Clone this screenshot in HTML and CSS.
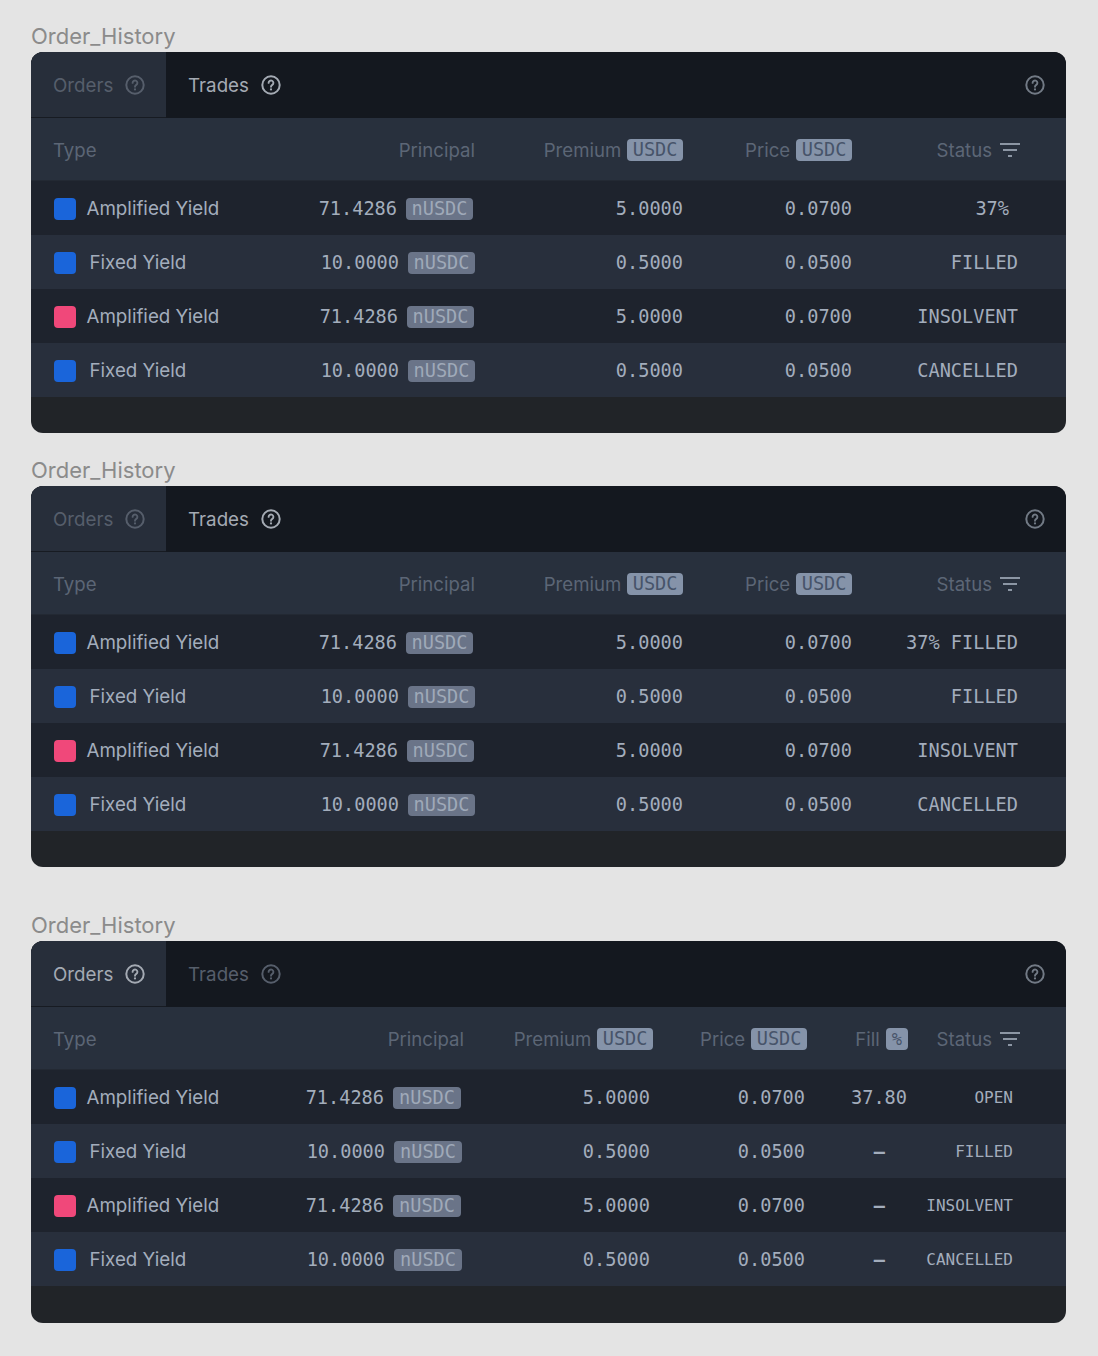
FILE: index.html
```html
<!DOCTYPE html>
<html lang="en">
<head>
    <title>Order_History</title>
    <meta charset="UTF-8">
    <link rel="stylesheet" href="styles.css">
</head>
<body>
    <svg class="sprite" width="0" height="0">
        <symbol id="help" viewBox="0 0 20 20">
            <circle cx="10" cy="10" r="8.7" fill="none" stroke="currentColor" stroke-width="2"/>
            <path d="M7.6 7.9a2.4 2.4 0 1 1 3.7 2c-.8.5-1.3 1-1.3 1.9" fill="none" stroke="currentColor" stroke-width="1.9" stroke-linecap="round"/>
            <circle cx="10" cy="14.4" r="1.1" fill="currentColor"/>
        </symbol>
        <symbol id="filter" viewBox="0 0 22 16">
            <path d="M1 2h20M4 8h14M9 14h4" fill="none" stroke="currentColor" stroke-width="2"/>
        </symbol>
    </svg>

    <section class="block first">
        <h2 class="title">Order_History</h2>
        <div class="card">
            <div class="tabs">
                <div class="tab on-bar">Orders <svg class="help"><use href="#help"/></svg></div>
                <div class="tab active">Trades <svg class="help"><use href="#help"/></svg></div>
                <svg class="help corner"><use href="#help"/></svg>
            </div>
            <div class="row head">
                <div>Type</div>
                <div class="num">Principal</div>
                <div class="num">Premium <span class="tag">USDC</span></div>
                <div class="num">Price <span class="tag">USDC</span></div>
                <div class="num status-head">Status <svg class="filter"><use href="#filter"/></svg></div>
            </div>
            <div class="row dark">
                <div class="type"><i class="dot blue"></i>Amplified Yield</div>
                <div class="num mono amp">71.4286 <span class="unit">nUSDC</span></div>
                <div class="num mono">5.0000</div>
                <div class="num mono">0.0700</div>
                <div class="num mono pct">37%</div>
            </div>
            <div class="row">
                <div class="type fixed"><i class="dot blue"></i>Fixed Yield</div>
                <div class="num mono">10.0000 <span class="unit">nUSDC</span></div>
                <div class="num mono">0.5000</div>
                <div class="num mono">0.0500</div>
                <div class="num mono">FILLED</div>
            </div>
            <div class="row dark">
                <div class="type"><i class="dot pink"></i>Amplified Yield</div>
                <div class="num mono amp-alt">71.4286 <span class="unit">nUSDC</span></div>
                <div class="num mono">5.0000</div>
                <div class="num mono">0.0700</div>
                <div class="num mono">INSOLVENT</div>
            </div>
            <div class="row">
                <div class="type fixed"><i class="dot blue"></i>Fixed Yield</div>
                <div class="num mono">10.0000 <span class="unit">nUSDC</span></div>
                <div class="num mono">0.5000</div>
                <div class="num mono">0.0500</div>
                <div class="num mono">CANCELLED</div>
            </div>
            <div class="foot"></div>
        </div>
    </section>

    <section class="block second">
        <h2 class="title">Order_History</h2>
        <div class="card">
            <div class="tabs">
                <div class="tab on-bar">Orders <svg class="help"><use href="#help"/></svg></div>
                <div class="tab active">Trades <svg class="help"><use href="#help"/></svg></div>
                <svg class="help corner"><use href="#help"/></svg>
            </div>
            <div class="row head">
                <div>Type</div>
                <div class="num">Principal</div>
                <div class="num">Premium <span class="tag">USDC</span></div>
                <div class="num">Price <span class="tag">USDC</span></div>
                <div class="num status-head">Status <svg class="filter"><use href="#filter"/></svg></div>
            </div>
            <div class="row dark">
                <div class="type"><i class="dot blue"></i>Amplified Yield</div>
                <div class="num mono amp">71.4286 <span class="unit">nUSDC</span></div>
                <div class="num mono">5.0000</div>
                <div class="num mono">0.0700</div>
                <div class="num mono">37% FILLED</div>
            </div>
            <div class="row">
                <div class="type fixed"><i class="dot blue"></i>Fixed Yield</div>
                <div class="num mono">10.0000 <span class="unit">nUSDC</span></div>
                <div class="num mono">0.5000</div>
                <div class="num mono">0.0500</div>
                <div class="num mono">FILLED</div>
            </div>
            <div class="row dark">
                <div class="type"><i class="dot pink"></i>Amplified Yield</div>
                <div class="num mono amp-alt">71.4286 <span class="unit">nUSDC</span></div>
                <div class="num mono">5.0000</div>
                <div class="num mono">0.0700</div>
                <div class="num mono">INSOLVENT</div>
            </div>
            <div class="row">
                <div class="type fixed"><i class="dot blue"></i>Fixed Yield</div>
                <div class="num mono">10.0000 <span class="unit">nUSDC</span></div>
                <div class="num mono">0.5000</div>
                <div class="num mono">0.0500</div>
                <div class="num mono">CANCELLED</div>
            </div>
            <div class="foot"></div>
        </div>
    </section>

    <section class="block">
        <h2 class="title">Order_History</h2>
        <div class="card orders">
            <div class="tabs">
                <div class="tab active on-bar">Orders <svg class="help"><use href="#help"/></svg></div>
                <div class="tab">Trades <svg class="help"><use href="#help"/></svg></div>
                <svg class="help corner"><use href="#help"/></svg>
            </div>
            <div class="row head">
                <div>Type</div>
                <div class="num">Principal</div>
                <div class="num">Premium <span class="tag">USDC</span></div>
                <div class="num">Price <span class="tag">USDC</span></div>
                <div class="num">Fill <span class="tag percent">%</span></div>
                <div class="num status-head">Status <svg class="filter"><use href="#filter"/></svg></div>
            </div>
            <div class="row dark">
                <div class="type"><i class="dot blue"></i>Amplified Yield</div>
                <div class="num mono">71.4286 <span class="unit">nUSDC</span></div>
                <div class="num mono">5.0000</div>
                <div class="num mono">0.0700</div>
                <div class="num mono">37.80</div>
                <div class="num mono small">OPEN</div>
            </div>
            <div class="row">
                <div class="type fixed"><i class="dot blue"></i>Fixed Yield</div>
                <div class="num mono">10.0000 <span class="unit">nUSDC</span></div>
                <div class="num mono">0.5000</div>
                <div class="num mono">0.0500</div>
                <div class="num mono dash">–</div>
                <div class="num mono small">FILLED</div>
            </div>
            <div class="row dark">
                <div class="type"><i class="dot pink"></i>Amplified Yield</div>
                <div class="num mono">71.4286 <span class="unit">nUSDC</span></div>
                <div class="num mono">5.0000</div>
                <div class="num mono">0.0700</div>
                <div class="num mono dash">–</div>
                <div class="num mono small">INSOLVENT</div>
            </div>
            <div class="row">
                <div class="type fixed"><i class="dot blue"></i>Fixed Yield</div>
                <div class="num mono">10.0000 <span class="unit">nUSDC</span></div>
                <div class="num mono">0.5000</div>
                <div class="num mono">0.0500</div>
                <div class="num mono dash">–</div>
                <div class="num mono small">CANCELLED</div>
            </div>
            <div class="foot"></div>
        </div>
    </section>
</body>
</html>
```

FILE: styles.css
```css
body {
    margin: 0;
    padding: 24px 32px 0 31px;
    background-color: #e4e4e4;
    font-family: Inter, "Liberation Sans", sans-serif;
    font-size: 18.75px;
    color: #a3adbc;
}
.sprite {
    position: absolute;
}
.block.first {
    margin-bottom: 25px;
}
.block.second {
    margin-bottom: 46px;
}
.title {
    margin: 0 0 4px;
    font-size: 22px;
    font-weight: 400;
    line-height: 24px;
    color: #8b8b8b;
}
.card {
    height: 381px;
    background-color: #212428;
    border-radius: 12px;
    overflow: hidden;
}
.card.orders {
    height: 382px;
}
.tabs {
    display: flex;
    align-items: stretch;
    height: 66px;
    background-color: #14181f;
    color: #565e6b;
}
.tab {
    display: flex;
    align-items: center;
    gap: 12px;
    width: 113px;
    padding-left: 22px;
}
.tab.on-bar {
    background-color: #272e3a;
    box-shadow: inset 0 -1px 0 #171b22;
}
.tab.active {
    color: #a4aab3;
}
.help {
    width: 20px;
    height: 20px;
}
.corner {
    align-self: center;
    margin-left: auto;
    margin-right: 21px;
    color: #727a85;
}
.row {
    display: grid;
    grid-template-columns: 200px 222px 208px 169px 166px;
    align-items: center;
    box-sizing: border-box;
    height: 54px;
    padding: 1px 48px 0 22px;
    background-color: #282f3c;
}
.row.dark {
    background-color: #1e232d;
}
.row.head {
    height: 63px;
    padding-top: 2px;
    background-color: #28303d;
    border-bottom: 1px solid #232933;
    font-size: 18.6px;
    color: #5c6676;
}
.orders .row {
    grid-template-columns: 188px 223px 189px 154px 101px 105px;
    padding-right: 53px;
}
.orders .row:not(.head) > .mono:nth-child(2) {
    padding-right: 2px;
}
.orders .row.dark > .mono:nth-child(2) {
    padding-right: 3px;
}
.orders .row:not(.head) > .mono:nth-child(3) {
    padding-right: 3px;
}
.orders .row:not(.head) > .mono:nth-child(4) {
    padding-right: 2px;
}
.orders .row:not(.head) > .mono:nth-child(5) {
    padding-right: 1px;
}
.orders .row:not(.head) > .mono.dash:nth-child(5) {
    padding-right: 23px;
    font-weight: 700;
}
.num {
    display: flex;
    justify-content: flex-end;
    align-items: center;
    gap: 6px;
    white-space: nowrap;
}
.mono {
    font-family: "DejaVu Sans Mono", monospace;
    font-size: 18.6px;
    gap: 9px;
    color: #a3adbc;
}
.small {
    font-size: 16px;
}
.amp {
    padding-right: 2px;
}
.amp-alt {
    padding-right: 1px;
}
.pct {
    padding-right: 9px;
}
.status-head {
    gap: 7px;
    margin-right: -3px;
}
.orders .status-head {
    margin-right: -8px;
}
.tag {
    padding: 0 5.5px;
    line-height: 22px;
    border-radius: 4px;
    background-color: #8593a9;
    font-family: "DejaVu Sans Mono", monospace;
    font-size: 18.6px;
    color: #47546a;
}
.tag.percent {
    padding: 0 6px;
    font-size: 17px;
}
.unit {
    padding: 0 5.5px;
    line-height: 22px;
    border-radius: 4px;
    background-color: #6a7488;
    font-size: 18.6px;
    color: #9fa9b8;
}
.orders .unit {
    padding: 0 6px;
}
.filter {
    width: 22px;
    height: 16px;
    color: #8c96a4;
}
.type {
    display: flex;
    align-items: center;
    gap: 10.5px;
}
.type.fixed {
    gap: 13.5px;
}
.dot {
    width: 22px;
    height: 22px;
    margin-left: 1px;
    border-radius: 4px;
    flex-shrink: 0;
}
.blue {
    background-color: #1a65da;
}
.pink {
    background-color: #f0487a;
}
```
